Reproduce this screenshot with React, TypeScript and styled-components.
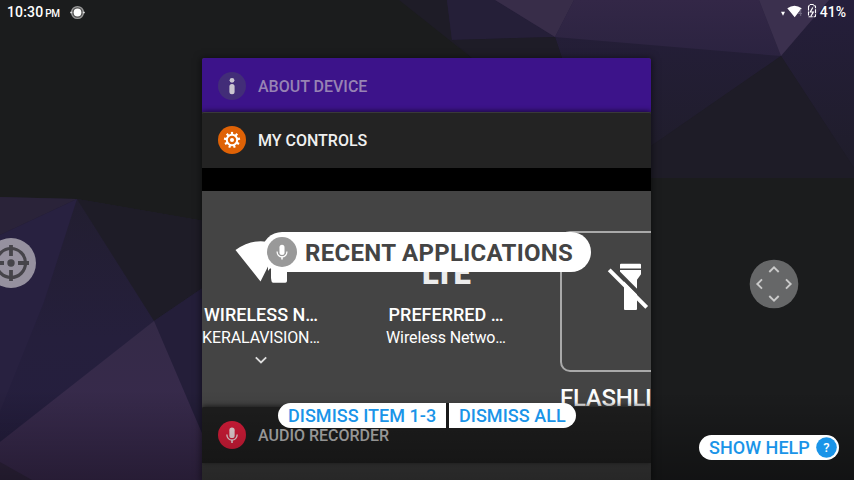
import React from 'react';
import styled, { createGlobalStyle } from 'styled-components';

const Global = createGlobalStyle`
  * { box-sizing: border-box; }
  html, body { margin: 0; padding: 0; background: #1a1b1c; }
  body { font-family: Roboto, "Liberation Sans", sans-serif; overflow: hidden; }
  svg { display: block; flex: none; }
`;

const Screen = styled.main`
  position: relative;
  isolation: isolate;
  width: 854px;
  height: 480px;
  overflow: hidden;
  display: flex;
  flex-direction: column;
  background: #1b1c1d;
`;

const Wallpaper = styled.svg`
  position: absolute;
  inset: 0;
  z-index: -1;
`;

const StatusBar = styled.header`
  display: flex;
  justify-content: space-between;
  height: 58px;
  padding: 4px 8px 0 7px;
  color: #fff;
`;

const StatusGroup = styled.div`
  display: flex;
  align-items: center;
  height: 17px;
`;

const Clock = styled.span`
  font-size: 14px;
  font-weight: 500;
  line-height: 17px;
  letter-spacing: 0.15px;
  margin-right: 10px;
  white-space: nowrap;
  small { font-size: 10px; margin-left: 2px; letter-spacing: -0.3px; }
`;

const Battery = styled.span`
  font-size: 14px;
  font-weight: 500;
  line-height: 17px;
  margin-left: 3px;
`;

const Stack = styled.section`
  width: 449px;
  height: 422px;
  display: flex;
  flex-direction: column;
  overflow: hidden;
  border-radius: 2px 2px 0 0;
  background: #3a3a3a;
`;

const StackShadow = styled.div`
  box-shadow: 0 1px 7px 1px rgba(0, 0, 0, 0.5);
  width: 449px;
  margin-left: 202px;
`;

const CardHeader = styled.div<{ $bg: string; $fg: string; $h: number; $pad?: string; $edge?: string; $shade?: boolean }>`
  position: relative;
  flex: none;
  display: flex;
  align-items: center;
  gap: 12px;
  height: ${p => p.$h}px;
  padding: ${p => p.$pad ?? '0 0 0 16px'};
  background: ${p => p.$bg};
  color: ${p => p.$fg};
  border-top: ${p => (p.$edge ? `1px solid ${p.$edge}` : '0')};
  border-radius: 2px 2px 0 0;
  box-shadow: ${p => (p.$shade ? '0 -1px 5px rgba(0,0,0,0.6)' : 'none')};
  font-size: 16px;
  font-weight: 500;
  line-height: 20px;
  span { padding-top: 2px; }
`;

const Strip = styled.div`
  flex: none;
  height: 23px;
  background: #000;
`;

const Tiles = styled.div`
  flex: none;
  display: flex;
  height: 216px;
  overflow: hidden;
  background: #444;
  color: #fff;
`;

const Tile = styled.div<{ $w: number; $gap: number }>`
  flex: none;
  display: flex;
  flex-direction: column;
  align-items: center;
  width: ${p => p.$w}px;
  margin-right: ${p => p.$gap}px;
  padding-top: 48px;
`;

const TileArt = styled.div`
  display: flex;
  justify-content: center;
  width: 100%;
  height: 64px;
`;

const TileTitle = styled.div`
  font-size: 18px;
  font-weight: 500;
  line-height: 24px;
  white-space: nowrap;
`;

const TileNote = styled.div`
  height: 28px;
  font-size: 16px;
  line-height: 21px;
  letter-spacing: -0.12px;
  white-space: nowrap;
`;

const Lte = styled.div`
  padding-top: 16px;
  font-size: 31px;
  font-weight: 900;
  line-height: 38px;
  letter-spacing: -0.8px;
  color: #ececec;
`;

const TorchTile = styled.div`
  flex: none;
  width: 142px;
  padding-top: 40px;
`;

const TorchFrame = styled.div`
  height: 141px;
  padding: 28px 0 0 45px;
  border: 2px solid #a9a9a9;
  border-radius: 10px;
`;

const TorchTitle = styled.div`
  margin-top: 10px;
  font-size: 24px;
  font-weight: 500;
  line-height: 32px;
  letter-spacing: -0.3px;
  white-space: nowrap;
`;

const Scrim = styled.div`
  position: absolute;
  inset: 390px 0 0;
  background: linear-gradient(rgba(0, 0, 0, 0), rgba(0, 0, 0, 0.33));
`;

const Floating = styled.div<{ $x: number; $y: number }>`
  position: absolute;
  left: ${p => p.$x}px;
  top: ${p => p.$y}px;
`;

const Announcement = styled(Floating)`
  display: flex;
  align-items: center;
  gap: 8px;
  width: 329px;
  height: 40px;
  padding-left: 5px;
  border-radius: 20px;
  background: #fff;
  color: #444;
  font-size: 24px;
  font-weight: 700;
  line-height: 28px;
  letter-spacing: 0.3px;
  white-space: nowrap;
  span { padding-top: 2px; }
`;

const ActionRow = styled(Floating)`
  display: flex;
  gap: 3px;
  background: linear-gradient(90deg, transparent 20px, #191919 20px, #191919 calc(100% - 20px), transparent calc(100% - 20px));
`;

const Action = styled.button<{ $w: number; $side: 'left' | 'right' | 'both' }>`
  display: flex;
  align-items: center;
  width: ${p => p.$w}px;
  height: 25px;
  padding: 0 0 0 10px;
  border: 0;
  border-radius: ${p => ({ left: '13px 0 0 13px', right: '0 13px 13px 0', both: '13px' })[p.$side]};
  background: #fff;
  color: #1a94e8;
  font: 500 18px Roboto, sans-serif;
  letter-spacing: 0.04px;
  white-space: nowrap;
  svg { margin-left: 6px; }
`;

const Mic = ({ size, fill, ink, glyph }: { size: number; fill: string; ink: string; glyph: number }) => (
  <svg width={size} height={size} viewBox={`${-size / 2} ${-size / 2} ${size} ${size}`}>
    <circle r={size / 2} fill={fill} />
    <g transform={`scale(${glyph})`} fill={ink}>
      <rect x="-3" y="-8.5" width="6" height="12" rx="3" />
      <path d="M-5.8 -.5V0a5.8 5.8 0 0 0 11.6 0V-.5" fill="none" stroke={ink} strokeWidth="1.5" />
      <path d="M-.9 5.5H.9V9H-.9Z" />
    </g>
  </svg>
);

const InfoIcon = () => (
  <svg width="28" height="28" viewBox="0 0 28 28">
    <circle cx="14" cy="14" r="14" fill="#422d78" />
    <circle cx="14" cy="8.3" r="2.4" fill="#cac6d0" />
    <rect x="11.4" y="12" width="5.2" height="10.2" rx="2.5" fill="#cac6d0" />
  </svg>
);

const GearIcon = () => (
  <svg width="28" height="28" viewBox="-14 -14 28 28">
    <circle r="14" fill="#df6206" />
    <circle r="5.2" fill="none" stroke="#fff" strokeWidth="2" />
    {Array.from({ length: 9 }, (_, i) => (
      <rect key={i} x="-1.1" y="-8.1" width="2.2" height="3" fill="#fff" transform={`rotate(${i * 40})`} />
    ))}
    <circle r="2" fill="#fff" />
  </svg>
);

const RecordIcon = () => (
  <svg width="15" height="15" viewBox="-7.5 -7.5 15 15">
    <circle r="5.9" fill="#4a4a4a" stroke="#999" strokeWidth="1.4" />
    <path d="M-7.3 0h2M5.3 0h2" stroke="#ddd" strokeWidth="1.6" />
    <circle r="3.9" fill="#fff" />
  </svg>
);

const SignalIcons = () => (
  <svg width="36" height="17" viewBox="781 4 36 17">
    <path d="M781 11.7h4l-2 4z" fill="#fff" />
    <path d="M787.3 8.3q7.2-5 14.4 0l-3 3.6-4 5.4z" fill="#fff" />
    <path d="M801 9.5l-2.6 4h3.6M800.7 9.5V16" fill="none" stroke="#716982" strokeWidth="1" />
    <path d="M808.5 6.5V16q0 .8.8.8h5.4q.8 0 .8-.8V6.5q0-.8-.8-.8h-1V4.5h-3.4v1.2h-1q-.8 0-.8.8z" fill="none" stroke="#fff" strokeWidth="1.1" strokeDasharray="4 1" />
    <path d="M812.8 7.5l-2.5 4.5h3l-2.3 4" fill="none" stroke="#fff" strokeWidth="1.2" />
  </svg>
);

const WifiArt = () => (
  <svg width="60" height="48" viewBox="231 238 60 48">
    <path d="M235.500 249q24-17 50-1l-17.500 22v-4.500l-7.500 15z" fill="#fff" />
    <path d="M271 277v-8q0-9 8-9t8 9v11q0 1.700-1.700 1.700h-12.100q-1.700 0-1.700-1.700z" fill="#fff" />
  </svg>
);

const Chevron = () => (
  <svg width="14" height="10" viewBox="0 0 14 10">
    <path d="M1.8 2.3 7 7.5 12.2 2.3" fill="none" stroke="#ddd" strokeWidth="1.8" />
  </svg>
);

const TorchOff = () => (
  <svg width="42" height="50" viewBox="607 261 42 50">
    <path d="M620 264.8q0-1 1-1h19q1 0 1 1v3.700h-21zM620 270h21v4.200l-4 5.500v29.200q0 1-1 1h-11q-1 0-1-1v-29.200l-4-5.500z" fill="#fff" />
    <path d="M612.5 267l37 37" stroke="#444" strokeWidth="4" />
    <path d="M609.2 269.800l37.500 37.600" stroke="#fff" strokeWidth="4" />
  </svg>
);

const Crosshair = () => (
  <svg width="50" height="50" viewBox="-25 -25 50 50">
    <circle r="25" fill="#96919f" />
    <g fill="none" stroke="#46444a">
      <circle r="14.5" strokeWidth="3.2" />
      <path d="M0-18V-7M0 18V7M-18 0H-7M18 0H7" strokeWidth="3.8" />
    </g>
    <circle r="3.7" fill="#46444a" />
  </svg>
);

const MovePad = () => (
  <svg width="50" height="50" viewBox="-25 -25 50 50">
    <circle r="24.3" fill="#666768" />
    {[0, 90, 180, 270].map(a => (
      <path key={a} d="M-4.7-12 0-16.7 4.7-12" fill="none" stroke="#cacaca" strokeWidth="1.9" transform={`rotate(${a})`} />
    ))}
  </svg>
);

const HelpIcon = () => (
  <svg width="21" height="21" viewBox="0 0 21 21">
    <circle cx="10.5" cy="10.5" r="10.3" fill="#1a94e8" />
    <text x="10.5" y="15" textAnchor="middle" fontFamily="Roboto" fontWeight="500" fontSize="13" fill="#fff">?</text>
  </svg>
);

const Facets = () => (
  <Wallpaper width="854" height="480" viewBox="0 0 854 480">
    <defs>
      <linearGradient id="mauve" x2="0" y2="1"><stop stopColor="#332747" /><stop offset="1" stopColor="#2b2340" /></linearGradient>
      <linearGradient id="indigo" x2="0" y2="1"><stop stopColor="#221e30" /><stop offset=".5" stopColor="#251f3c" /><stop offset="1" stopColor="#251e40" /></linearGradient>
      <linearGradient id="fade" x2="0" y2="1"><stop stopColor="#251e3b" /><stop offset="1" stopColor="#1f1d2a" /></linearGradient>
      <linearGradient id="plum" x2="0" y2="1"><stop stopColor="#342a47" /><stop offset="1" stopColor="#3a2a4f" /></linearGradient>
    </defs>
    <path d="M0 197 77 199 204 221V480H0z" fill="url(#indigo)" />
    <path d="M0 197 77 199 0 235z" fill="#2a2339" />
    <path d="M0 235 77 199 44 302 0 412z" fill="#282140" />
    <path d="M77 199 204 221V287L154 321z" fill="#1e1c27" />
    <path d="M154 321 204 287V438z" fill="#241e39" />
    <path d="M154 321 0 442V480H204V438z" fill="url(#plum)" />
    <path d="M0 462 32 480H0z" fill="#30253f" />
    <path d="M399 0H854V178H654L472 58z" fill="#1e1c27" />
    <path d="M447 0H854V168L781 56 651 146V58H562L555 37 452 40z" fill="url(#fade)" />
    <path d="M447 0 452 40 555 37 495 0z" fill="#251f38" />
    <path d="M555 37 562 58H472L452 40z" fill="#1e1c27" />
    <path d="M495 0 555 37 574 0z" fill="#382d49" />
    <path d="M574 0 555 37 781 56 759 0z" fill="url(#mauve)" />
    <path d="M759 0H829L781 56z" fill="#3b304e" />
    <path d="M781 56 651 146V178H854V168z" fill="#1e1c27" />
  </Wallpaper>
);

export default function App() {
  return (
    <>
      <Global />
      <Screen>
        <Facets />
        <StatusBar>
          <StatusGroup>
            <Clock>10:30<small>PM</small></Clock>
            <RecordIcon />
          </StatusGroup>
          <StatusGroup>
            <SignalIcons />
            <Battery>41%</Battery>
          </StatusGroup>
        </StatusBar>
        <StackShadow>
          <Stack>
            <CardHeader $bg="#3c138a" $fg="#9783b4" $h={54} $pad="2px 0 0 16px">
              <InfoIcon />
              <span>ABOUT DEVICE</span>
            </CardHeader>
            <CardHeader $bg="#232323" $fg="#f0f0f0" $h={56} $pad="0 0 1px 16px" $edge="#393939" $shade>
              <GearIcon />
              <span>MY CONTROLS</span>
            </CardHeader>
            <Strip />
            <Tiles>
              <Tile $w={118} $gap={66}>
                <TileArt><WifiArt /></TileArt>
                <TileTitle>WIRELESS N…</TileTitle>
                <TileNote>KERALAVISION…</TileNote>
                <Chevron />
              </Tile>
              <Tile $w={120} $gap={54}>
                <TileArt><Lte>LTE</Lte></TileArt>
                <TileTitle>PREFERRED …</TileTitle>
                <TileNote>Wireless Netwo…</TileNote>
              </Tile>
              <TorchTile>
                <TorchFrame><TorchOff /></TorchFrame>
                <TorchTitle>FLASHLIGHT</TorchTitle>
              </TorchTile>
            </Tiles>
            <CardHeader $bg="#1e1e1e" $fg="#b3b3b3" $h={56} $shade>
              <Mic size={28} fill="#d81d3a" ink="#efdcde" glyph={0.88} />
              <span>AUDIO RECORDER</span>
            </CardHeader>
          </Stack>
        </StackShadow>
        <Scrim />
        <Announcement $x={262} $y={232}>
          <Mic size={30} fill="#999" ink="#fff" glyph={0.84} />
          <span>RECENT APPLICATIONS</span>
        </Announcement>
        <ActionRow $x={278} $y={403}>
          <Action $w={168} $side="left">DISMISS ITEM 1-3</Action>
          <Action $w={127} $side="right">DISMISS ALL</Action>
        </ActionRow>
        <Floating $x={-14} $y={238}><Crosshair /></Floating>
        <Floating $x={749} $y={259}><MovePad /></Floating>
        <Floating $x={699} $y={435}>
          <Action $w={140} $side="both">SHOW HELP<HelpIcon /></Action>
        </Floating>
      </Screen>
    </>
  );
}
